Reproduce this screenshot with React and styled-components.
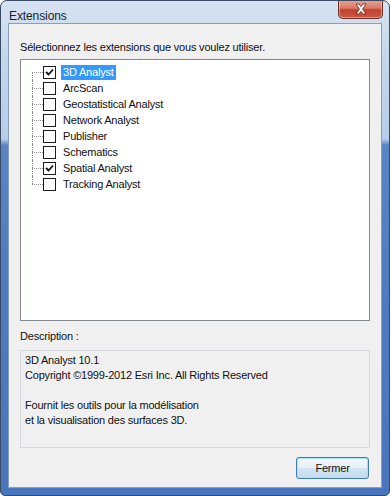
import React, { useState } from "react";
import styled, { createGlobalStyle } from "styled-components";

const extensions = [
  { name: "3D Analyst", checked: true },
  { name: "ArcScan", checked: false },
  { name: "Geostatistical Analyst", checked: false },
  { name: "Network Analyst", checked: false },
  { name: "Publisher", checked: false },
  { name: "Schematics", checked: false },
  { name: "Spatial Analyst", checked: true },
  { name: "Tracking Analyst", checked: false },
];

const App = () => {
  const [items, setItems] = useState(extensions);
  const [selected, setSelected] = useState(0);

  const toggle = (i) => {
    setItems(items.map((it, j) => (j === i ? { ...it, checked: !it.checked } : it)));
  };

  return (
    <>
      <GlobalStyle />
      <Window>
        <TitleBar>
          <Title>Extensions</Title>
          <CloseButton aria-label="Fermer">
            <svg width="14" height="12" viewBox="0 0 14 12">
              <path
                d="M2 1 L5 1 L7 3.6 L9 1 L12 1 L8.6 6 L12 11 L9 11 L7 8.4 L5 11 L2 11 L5.4 6 Z"
                fill="#fff"
                stroke="#5a1f1a"
                strokeWidth="0.8"
                strokeLinejoin="round"
              />
            </svg>
          </CloseButton>
        </TitleBar>
        <Client>
          <Label $gap={4}>Sélectionnez les extensions que vous voulez utiliser.</Label>
          <ListBox>
            <Tree>
              {items.map((it, i) => (
                <Row key={it.name} $first={i === 0} $last={i === items.length - 1}>
                  <Connector />
                  <CheckBox onClick={() => toggle(i)}>
                    {it.checked && (
                      <svg width="9" height="9" viewBox="0 0 9 9">
                        <path d="M1 4 L3.5 6.5 L8 1.5" fill="none" stroke="#111" strokeWidth="1.8" />
                      </svg>
                    )}
                  </CheckBox>
                  <ItemText $active={selected === i} onClick={() => setSelected(i)}>
                    {it.name}
                  </ItemText>
                </Row>
              ))}
            </Tree>
          </ListBox>
          <Label $gap={6}>Description :</Label>
          <Description>
            <div>3D Analyst 10.1</div>
            <div>Copyright ©1999-2012 Esri Inc. All Rights Reserved</div>
            <Spacer />
            <div>Fournit les outils pour la modélisation</div>
            <div>et la visualisation des surfaces 3D.</div>
          </Description>
          <Footer>
            <Button>Fermer</Button>
          </Footer>
        </Client>
      </Window>
    </>
  );
};

export default App;

const GlobalStyle = createGlobalStyle`
  html, body {
    margin: 0;
    padding: 0;
    background: #ffffff;
  }
  body {
    font-family: "Liberation Sans", Arial, sans-serif;
    font-size: 11px;
    letter-spacing: -0.2px;
    color: #000;
  }
`;

const Window = styled.div`
  width: 390px;
  height: 496px;
  box-sizing: border-box;
  display: flex;
  flex-direction: column;
  border: 1px solid #3a4a60;
  border-radius: 7px 7px 5px 5px;
  background: linear-gradient(
    180deg,
    #d7e3f2 0px,
    #c4d6ec 60px,
    #b7cdea 138px,
    #5b84c6 144px,
    #4f79c0 300px,
    #4a74bb 496px
  );
  padding: 0 7px 7px 7px;
  overflow: hidden;
`;

const TitleBar = styled.div`
  height: 29px;
  display: flex;
  align-items: flex-start;
  justify-content: space-between;
`;

const Title = styled.div`
  font-family: "Liberation Sans", Arial, sans-serif;
  font-size: 12px;
  letter-spacing: -0.1px;
  color: #1e1e1e;
  padding: 8px 0 0 1px;
`;

const CloseButton = styled.div`
  width: 45px;
  height: 19px;
  margin-top: -1px;
  margin-right: -1px;
  display: flex;
  align-items: center;
  justify-content: center;
  box-sizing: border-box;
  border: 1px solid #6b2a24;
  border-top: none;
  border-radius: 0 0 5px 5px;
  background: linear-gradient(180deg, #e8a393 0%, #d87a68 45%, #c2402f 55%, #c85a45 100%);
  box-shadow: inset 0 0 0 1px rgba(255, 220, 210, 0.5);
`;

const Client = styled.div`
  flex: 1;
  display: flex;
  flex-direction: column;
  background: #f0f0f0;
  border: 1px solid #8a9fba;
  padding: 15px 11px 8px 11px;
`;

const Label = styled.div`
  height: 16px;
  line-height: 16px;
  margin-bottom: ${(p) => p.$gap}px;
  color: #111;
`;

const ListBox = styled.div`
  height: 262px;
  background: #fff;
  border: 1px solid #828790;
  box-sizing: border-box;
  padding: 4px 0 0 11px;
  margin-bottom: 7px;
`;

const Tree = styled.div`
  display: flex;
  flex-direction: column;
`;

const Row = styled.div`
  height: 16px;
  display: flex;
  align-items: center;
  position: relative;
  &::before {
    content: "";
    position: absolute;
    left: 0;
    top: ${(p) => (p.$first ? "8px" : "0")};
    height: ${(p) => (p.$first ? "8px" : p.$last ? "8px" : "16px")};
    border-left: 1px dotted #8a8a8a;
  }
`;

const Connector = styled.span`
  width: 11px;
  border-top: 1px dotted #8a8a8a;
`;

const CheckBox = styled.span`
  width: 13px;
  height: 13px;
  box-sizing: border-box;
  border: 1px solid #1c1c1c;
  background: #fff;
  display: flex;
  align-items: center;
  justify-content: center;
  flex-shrink: 0;
`;

const ItemText = styled.span`
  margin-left: 5px;
  padding: 0 2px;
  line-height: 15px;
  background: ${(p) => (p.$active ? "#3399ff" : "transparent")};
  color: ${(p) => (p.$active ? "#fff" : "#111")};
`;

const Description = styled.div`
  height: 98px;
  box-sizing: border-box;
  border: 1px solid #d5d9de;
  background: #f0f0f0;
  padding: 2px 4px;
  line-height: 15px;
  color: #111;
`;

const Spacer = styled.div`
  height: 15px;
`;

const Footer = styled.div`
  display: flex;
  justify-content: flex-end;
  padding-top: 9px;
  padding-right: 1px;
`;

const Button = styled.button`
  width: 73px;
  height: 22px;
  font-family: "Liberation Sans", Arial, sans-serif;
  font-size: 11px;
  letter-spacing: -0.2px;
  color: #111;
  border: 1px solid #3c7fb1;
  border-radius: 3px;
  background: linear-gradient(180deg, #f4f8fb 0%, #e8f1f8 48%, #d2e5f3 52%, #c5dcee 100%);
  box-shadow: inset 0 0 0 1px #a8e1f8;
  padding: 0;
`;
